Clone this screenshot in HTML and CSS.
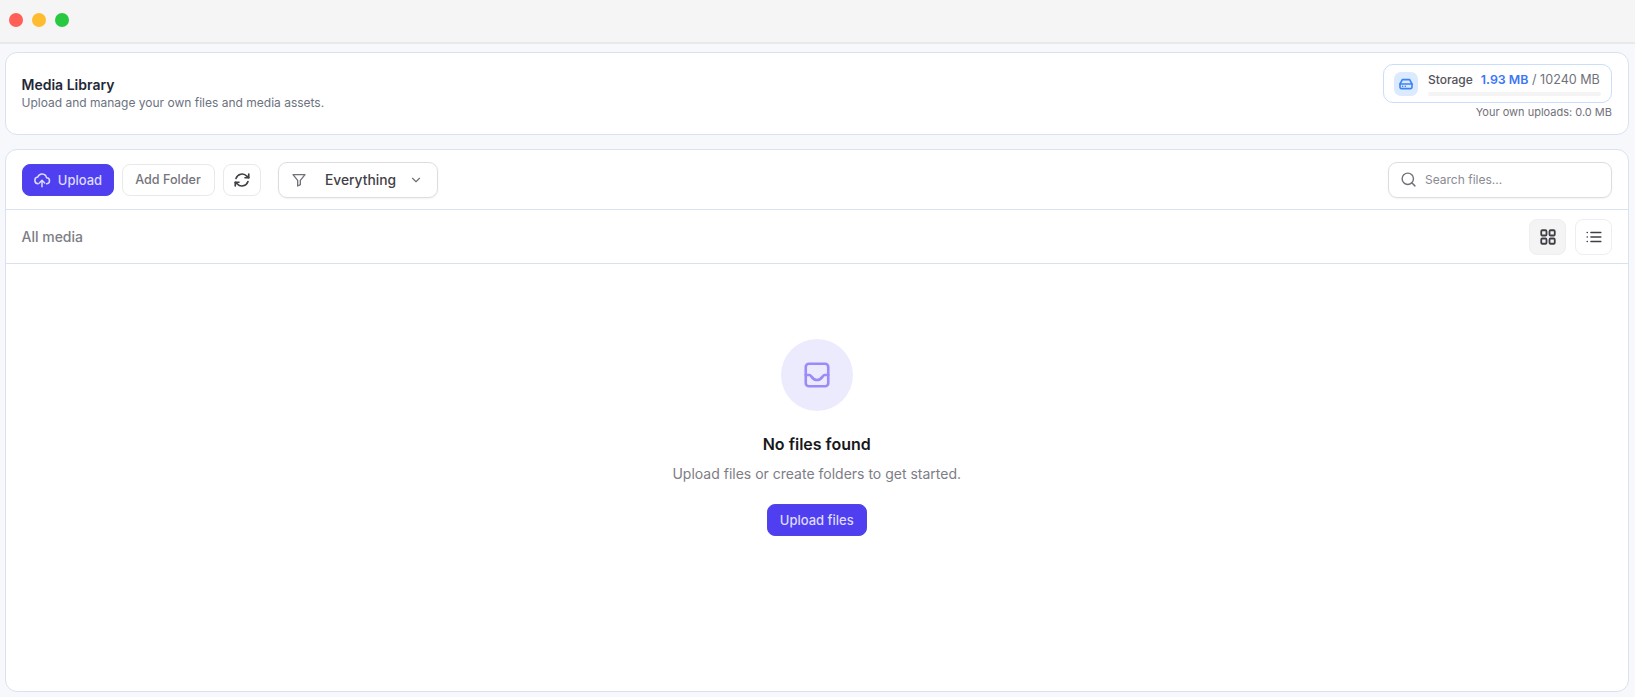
FILE: index.html
```html
<!DOCTYPE html>
<html lang="en">
<head>
<meta charset="utf-8">
<title>Media Library</title>
<link rel="stylesheet" href="styles.css">
</head>
<body>
<div class="titlebar">
  <span class="dot red"></span><span class="dot yellow"></span><span class="dot green"></span>
</div>
<main class="content">
  <section class="card header">
    <div>
      <h1>Media Library</h1>
      <p>Upload and manage your own files and media assets.</p>
    </div>
    <div class="storage-wrap">
      <div class="storage">
        <span class="storage-icon">
          <svg viewBox="0 0 24 24" width="16" height="16" fill="none" stroke="#3b82f6" stroke-width="2.400" stroke-linecap="round" stroke-linejoin="round"><path d="M3 12h18"/><path d="M6.500 5.500h11L21 12v5a2 2 0 0 1-2 2H5a2 2 0 0 1-2-2v-5z"/><path d="M7 15.500h.01M11 15.500h.01"/></svg>
        </span>
        <div class="storage-body">
          <div class="storage-text"><span class="storage-label">Storage</span><span class="storage-used">1.93 MB</span><span class="storage-total"> / 10240 MB</span></div>
          <div class="bar"></div>
        </div>
      </div>
      <div class="own">Your own uploads: 0.0 MB</div>
    </div>
  </section>
  <section class="card library">
    <div class="toolbar">
      <button class="btn primary upload">
        <svg viewBox="0 0 24 24" width="18" height="18" fill="none" stroke="currentColor" stroke-width="2" stroke-linecap="round" stroke-linejoin="round"><path d="M7 17a4.500 4.500 0 0 1-.6-8.960A6 6 0 0 1 18 9a4 4 0 0 1 0 8"/><path d="M12 21v-8"/><path d="M8.500 16 12 12.500 15.500 16"/></svg>
        Upload
      </button>
      <button class="btn outline">Add Folder</button>
      <button class="btn outline refresh">
        <svg viewBox="0 0 24 24" width="18" height="18" fill="none" stroke="#3f3f46" stroke-width="2.200" stroke-linecap="round" stroke-linejoin="round"><path d="M21 4v5h-5"/><path d="M3 20v-5h5"/><path d="M4 10a8.500 8.500 0 0 1 14.500-3L21 9"/><path d="M20 14a8.500 8.500 0 0 1-14.500 3L3 15"/></svg>
      </button>
      <div class="select">
        <svg viewBox="0 0 24 24" width="16" height="16" fill="none" stroke="#71717a" stroke-width="2" stroke-linecap="round" stroke-linejoin="round"><path d="M3 4h18l-7 8.500V19l-4 2v-8.500z"/></svg>
        <span class="select-label">Everything</span>
        <svg viewBox="0 0 24 24" width="14" height="14" fill="none" stroke="#71717a" stroke-width="2" stroke-linecap="round" stroke-linejoin="round"><path d="m6 9 6 6 6-6"/></svg>
      </div>
      <div class="search">
        <svg viewBox="0 0 24 24" width="17" height="17" fill="none" stroke="#71717a" stroke-width="2" stroke-linecap="round" stroke-linejoin="round"><circle cx="11" cy="11" r="8"/><path d="m21 21-4.300-4.300"/></svg>
        <span>Search files...</span>
      </div>
    </div>
    <div class="crumbs">
      <span class="crumb">All media</span>
      <div class="views">
        <button class="view active">
          <svg viewBox="0 0 24 24" width="18" height="18" fill="none" stroke="#3f3f46" stroke-width="2.400" stroke-linejoin="round"><rect x="3" y="3" width="7" height="7" rx="1.500"/><rect x="14" y="3" width="7" height="7" rx="1.500"/><rect x="3" y="14" width="7" height="7" rx="1.500"/><rect x="14" y="14" width="7" height="7" rx="1.500"/></svg>
        </button>
        <button class="view">
          <svg viewBox="0 0 24 24" width="18" height="18" fill="none" stroke="#3f3f46" stroke-width="2.200" stroke-linecap="round"><path d="M8 6h13M8 12h13M8 18h13M3 6h.01M3 12h.01M3 18h.01"/></svg>
        </button>
      </div>
    </div>
    <div class="empty">
      <div class="empty-icon">
        <svg viewBox="0 0 24 24" width="30" height="30" fill="none" stroke="#9a8cf8" stroke-width="2.100" stroke-linecap="round" stroke-linejoin="round"><rect x="3" y="3" width="18" height="18" rx="2.500"/><path d="M3 12h3c1.500 0 2 4 6 4s4.500-4 6-4h3"/></svg>
      </div>
      <h2>No files found</h2>
      <p>Upload files or create folders to get started.</p>
      <button class="btn primary cta">Upload files</button>
    </div>
  </section>
</main>
</body>
</html>
```
FILE: styles.css
```css
* { box-sizing: border-box; }
html, body { height: 100%; }
body {
  margin: 0;
  background: #f6f8fb;
  font-family: Inter, "Liberation Sans", sans-serif;
  color: #18181b;
  overflow: hidden;
  display: flex;
  flex-direction: column;
}
button { font-family: inherit; cursor: pointer; }
.titlebar {
  height: 44px;
  flex: none;
  background: #f5f5f5;
  border-bottom: 2px solid #e8e9eb;
  display: flex;
  align-items: center;
  gap: 9px;
  padding: 0 0 2px 9px;
}
.dot { width: 14px; height: 14px; border-radius: 50%; }
.red { background: #ff5f57; }
.yellow { background: #febc2e; }
.green { background: #28c840; }
.content {
  flex: 1;
  display: flex;
  flex-direction: column;
  gap: 14px;
  padding: 8px 6px 5px 4.500px;
  min-height: 0;
}
.card {
  background: #fff;
  border: 1.500px solid #d9e2ee;
  border-radius: 12px;
}
.header {
  height: 83px;
  flex: none;
  display: flex;
  justify-content: space-between;
  align-items: flex-start;
  padding: 11px 16px 0;
}
.header h1 {
  margin: 11px 0 0;
  font-size: 14px;
  line-height: 20px;
  font-weight: 600;
  color: #1f2937;
}
.header p {
  margin: 0;
  font-size: 12px;
  line-height: 16px;
  color: #6b7280;
}
.storage-wrap { display: flex; flex-direction: column; align-items: flex-end; }
.storage {
  width: 229px;
  height: 39px;
  border: 1.500px solid #c9defb;
  border-radius: 10px;
  display: flex;
  align-items: center;
  gap: 10px;
  padding: 0 10px;
}
.storage-icon {
  width: 24px;
  height: 24px;
  flex: none;
  border-radius: 7px;
  background: #dbeafe;
  display: flex;
  align-items: center;
  justify-content: center;
}
.storage-body { flex: 1; padding-top: 1px; }
.storage-text { font-size: 12px; line-height: 16px; white-space: nowrap; }
.storage-label { font-weight: 500; color: #52525b; margin-right: 8px; }
.storage-used { font-weight: 600; color: #3b76f6; font-size: 12.400px; }
.storage-total { color: #71717a; font-size: 12.600px; }
.bar { height: 4px; margin-top: 4px; border-radius: 2px; background: #f4f4f5; }
.own { margin-top: 2px; font-size: 11px; line-height: 15px; color: #71717a; }
.library { flex: 1; display: flex; flex-direction: column; min-height: 0; }
.toolbar {
  height: 60px;
  flex: none;
  display: flex;
  align-items: center;
  padding: 0 16px;
  border-bottom: 1.500px solid #d9e2ee;
}
.btn {
  height: 32px;
  border-radius: 8px;
  font-size: 13px;
  font-weight: 500;
  display: inline-flex;
  align-items: center;
  justify-content: center;
}
.primary {
  background: #4f3ff0;
  color: #dedbfe;
  border: 1px solid #4f46e5;
}
.upload { width: 92px; gap: 7px; margin-right: 8px; }
.outline {
  background: #fff;
  border: 1.500px solid #e9e9ec;
  color: #74747c;
  font-size: 12.600px;
  width: 93px;
}
.refresh { width: 38px; margin-left: 8px; margin-right: 17px; }
.select {
  width: 160px;
  height: 36px;
  border: 1.500px solid #dcdde1;
  border-radius: 9px;
  box-shadow: 0 1px 2px rgba(0,0,0,.05);
  display: flex;
  align-items: center;
  padding: 0 14px 0 12px;
  font-size: 13.800px;
  font-weight: 500;
  color: #3f3f46;
}
.select-label { flex: 1; text-align: center; margin-left: 10px; margin-right: 4px; }
.search {
  width: 224px;
  height: 36px;
  margin-left: auto;
  border: 1.500px solid #dcdde1;
  border-radius: 9px;
  box-shadow: 0 1px 2px rgba(0,0,0,.05);
  display: flex;
  align-items: center;
  gap: 8px;
  padding: 0 11px;
  font-size: 12px;
  color: #8a8a93;
}
.crumbs {
  height: 54px;
  flex: none;
  display: flex;
  align-items: center;
  justify-content: space-between;
  padding: 0 16px;
  border-bottom: 1.500px solid #d9e2ee;
}
.crumb { font-size: 14px; font-weight: 500; color: #7d7d85; }
.views { display: flex; gap: 9px; }
.view {
  width: 37px;
  height: 36px;
  padding: 0;
  border: 1.500px solid #eeeef0;
  border-radius: 8px;
  background: #fff;
  display: flex;
  align-items: center;
  justify-content: center;
}
.view.active { background: #f4f4f5; }
.empty {
  flex: 1;
  display: flex;
  flex-direction: column;
  align-items: center;
  padding-top: 75px;
}
.empty-icon {
  width: 72px;
  height: 72px;
  border-radius: 50%;
  background: #ecebfe;
  display: flex;
  align-items: center;
  justify-content: center;
}
.empty h2 {
  margin: 21px 0 0;
  font-size: 16px;
  line-height: 24px;
  font-weight: 600;
  color: #18181b;
}
.empty p {
  margin: 8px 0 0;
  font-size: 14px;
  line-height: 20px;
  color: #7d7d85;
}
.cta { width: 100px; margin-top: 20px; }
```
